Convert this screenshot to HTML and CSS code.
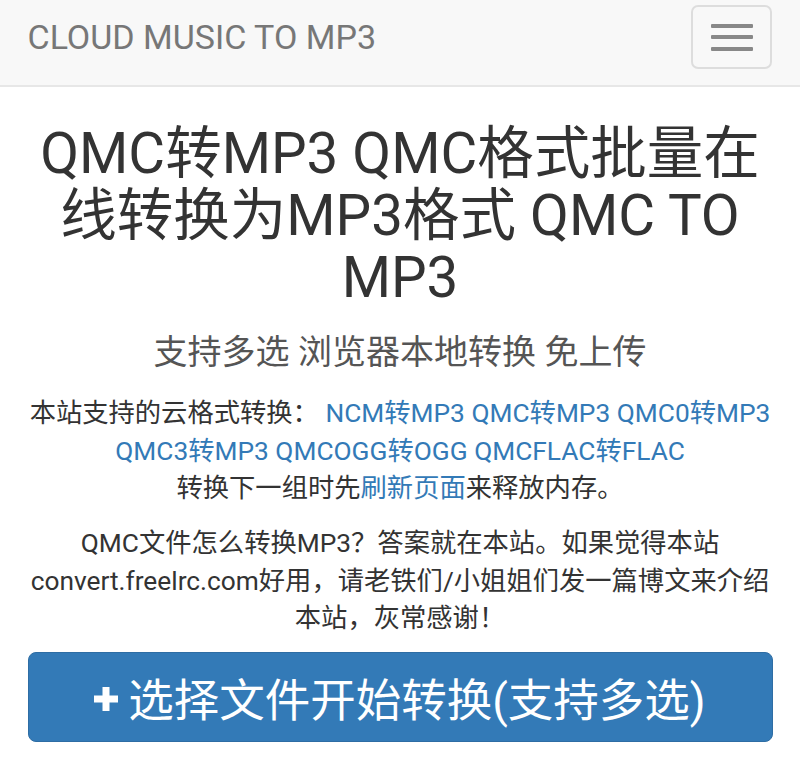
FILE: index.html
```html
<!DOCTYPE html>
<html lang="zh-CN">
<head>
<meta charset="utf-8">
<title>QMC转MP3</title>
<link rel="stylesheet" href="styles.css">
</head>
<body>
<nav class="navbar">
  <a class="brand" href="#">CLOUD MUSIC TO MP3</a>
  <button class="toggle" type="button" aria-label="menu">
    <span class="bar"></span>
    <span class="bar"></span>
    <span class="bar"></span>
  </button>
</nav>
<main class="container">
  <h1 class="title">QMC转MP3 QMC格式批量在线转换为MP3格式 QMC TO MP3</h1>
  <h3 class="subtitle">支持多选 浏览器本地转换 免上传</h3>
  <p class="info first">本站支持的云格式转换： <a href="#">NCM转MP3</a> <a href="#">QMC转MP3</a> <a href="#">QMC0转MP3</a> <a href="#">QMC3转MP3</a> <a href="#">QMCOGG转OGG</a> <a href="#">QMCFLAC转FLAC</a><br>转换下一组时先<a href="#">刷新页面</a>来释放内存。</p>
  <p class="info second">QMC文件怎么转换MP3？答案就在本站。如果觉得本站convert.freelrc.com好用，请老铁们/小姐姐们发一篇博文来介绍本站，灰常感谢！</p>
  <button class="btn-select" type="button">
    <svg class="plus" viewBox="0 0 24 24" width="24" height="24" aria-hidden="true"><path d="M8.5 0h7v8.5H24v7h-8.5V24h-7v-8.5H0v-7h8.5z" fill="#fff"/></svg>
    <span>选择文件开始转换(支持多选)</span>
  </button>
</main>
</body>
</html>
```
FILE: styles.css
```css
html, body {
  margin: 0;
  padding: 0;
  background: #fff;
}
body {
  font-family: Roboto, "Noto Sans CJK SC", "Noto Sans", sans-serif;
  color: #333;
}
.navbar {
  display: flex;
  justify-content: space-between;
  align-items: center;
  height: 64px;
  padding: 5px 28px 16px 27.5px;
  background: #f8f8f8;
  border-bottom: 2px solid #e7e7e7;
}
.brand {
  font-size: 34px;
  line-height: 37px;
  color: #777;
  text-decoration: none;
}
.toggle {
  box-sizing: border-box;
  width: 81px;
  height: 64px;
  border: 2px solid #ddd;
  border-radius: 7px;
  background: transparent;
  display: flex;
  flex-direction: column;
  justify-content: center;
  align-items: center;
  gap: 7.5px;
  padding: 0;
}
.bar {
  display: block;
  width: 42px;
  height: 4px;
  border-radius: 1px;
  background: #888;
}
.container {
  padding: 0 27.5px;
  text-align: center;
}
.title {
  margin: 36px 0 0;
  font-size: 56.5px;
  line-height: 1.1;
  font-weight: 400;
  color: #333;
}
.subtitle {
  margin: 20px 0 0;
  font-size: 34px;
  line-height: 46px;
  font-weight: 400;
  color: #555;
}
.info {
  margin: 0;
  font-size: 26.3px;
  line-height: 37.5px;
}
.info.first {
  margin-top: 20px;
}
.info.second {
  margin-top: 17.5px;
}
.info a {
  color: #337ab7;
  text-decoration: none;
}
.btn-select {
  box-sizing: border-box;
  margin-top: 14.5px;
  width: 100%;
  height: 90px;
  display: flex;
  justify-content: center;
  align-items: center;
  gap: 10px;
  background: #337ab7;
  border: 1px solid #2e6da4;
  border-radius: 8px;
  color: #fff;
  font-family: Roboto, "Noto Sans CJK SC", "Noto Sans", sans-serif;
  font-size: 45.5px;
  padding: 0;
}
.plus {
  display: block;
  margin-top: 4px;
}
```
